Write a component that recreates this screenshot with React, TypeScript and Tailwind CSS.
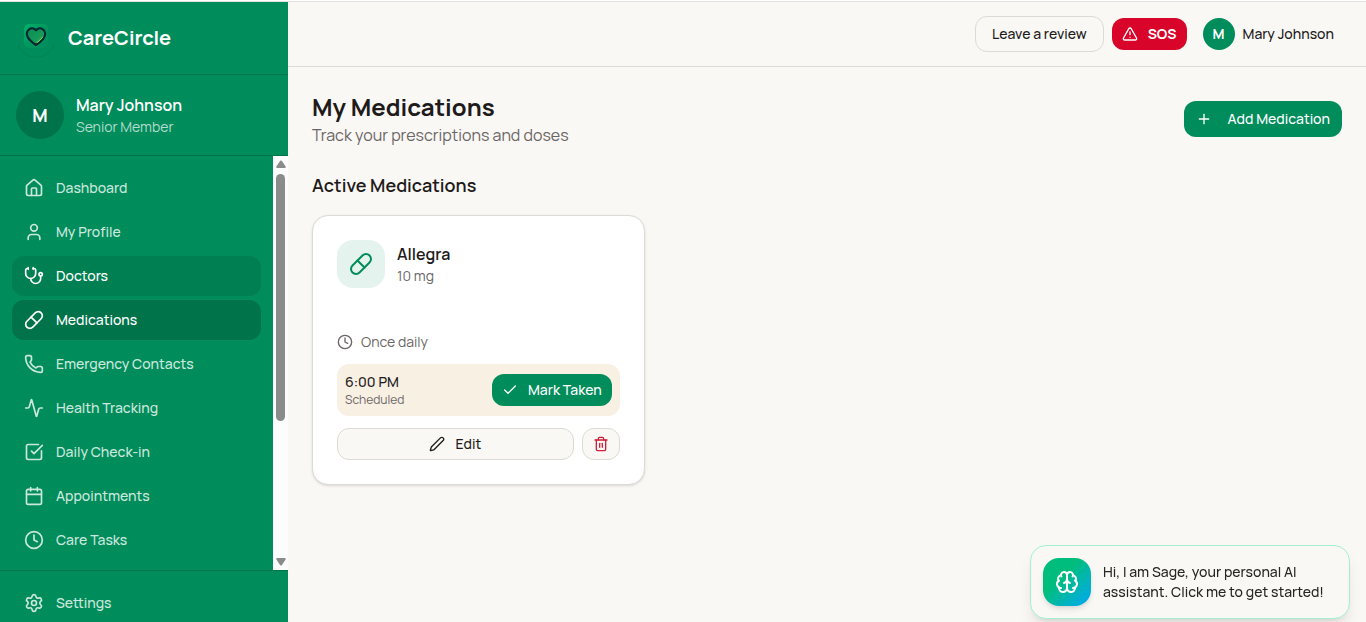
import {
  Activity,
  Brain,
  Calendar,
  Check,
  Clock,
  House,
  Pen,
  Phone,
  Pill,
  Plus,
  Settings,
  SquareCheckBig,
  Stethoscope,
  Trash2,
  TriangleAlert,
  User,
  type LucideIcon,
} from "lucide-react";

interface NavItem {
  label: string;
  icon: LucideIcon;
  state?: "active" | "hover";
}

const navItems: NavItem[] = [
  { label: "Dashboard", icon: House },
  { label: "My Profile", icon: User },
  { label: "Doctors", icon: Stethoscope, state: "hover" },
  { label: "Medications", icon: Pill, state: "active" },
  { label: "Emergency Contacts", icon: Phone },
  { label: "Health Tracking", icon: Activity },
  { label: "Daily Check-in", icon: SquareCheckBig },
  { label: "Appointments", icon: Calendar },
  { label: "Care Tasks", icon: Clock },
];

const medications = [
  { id: "1", name: "Allegra", dose: "10 mg", frequency: "Once daily", time: "6:00 PM", status: "Scheduled" },
];

function Logo() {
  return (
    <svg viewBox="0 0 40 40" className="size-10" aria-hidden="true">
      <defs>
        <linearGradient id="tile" x1="0" y1="0" x2="1" y2="1">
          <stop offset="0" stopColor="#00b368" />
          <stop offset="0.5" stopColor="#009860" />
          <stop offset="1" stopColor="#008c5b" />
        </linearGradient>
        <linearGradient id="heart" x1="0" y1="0" x2="1" y2="1">
          <stop offset="0" stopColor="#0a8a58" />
          <stop offset="0.6" stopColor="#169a58" />
          <stop offset="1" stopColor="#5fc95a" />
        </linearGradient>
      </defs>
      <path d="M1.5 26a19.5 19.5 0 0 0 37 0" fill="none" stroke="#007d51" strokeWidth="0.6" />
      <rect x="8" y="6" width="24" height="24" rx="5" fill="url(#tile)" />
      <path
        d="M20 12.2c-1.800-2-4.800-2.400-6.900-.9-2.500 1.800-2.800 5.300-1.300 8 1.700 3 4.700 5.400 8.200 7.700 3.500-2.300 6.500-4.700 8.200-7.700 1.500-2.700 1.200-6.200-1.300-8-2.100-1.500-5.100-1.100-6.900.9z"
        fill="url(#heart)"
        stroke="#04262f"
        strokeWidth="2.2"
        strokeLinejoin="round"
      />
      <path d="M21 24.500c2.400-1.500 4.300-3.300 5.500-5.400" fill="none" stroke="#8fdc5c" strokeWidth="1" />
    </svg>
  );
}

function NavLink({ item }: { item: NavItem }) {
  const Icon = item.icon;
  const look =
    item.state === "active"
      ? "bg-[#00734b] text-white"
      : item.state === "hover"
        ? "bg-[#007f52] text-white"
        : "text-[#cce8de]";

  return (
    <a
      href="#"
      aria-current={item.state === "active" ? "page" : undefined}
      className={`flex h-10 shrink-0 items-center gap-3 rounded-xl px-3 text-sm font-medium ${look}`}
    >
      <Icon className="size-5 shrink-0" />
      {item.label}
    </a>
  );
}

function Sidebar() {
  return (
    <aside className="flex w-72 shrink-0 flex-col bg-[#008c5b] text-white">
      <div className="flex h-[73px] items-center gap-3 border-b border-[#00734b] px-4">
        <Logo />
        <span className="text-xl font-bold">CareCircle</span>
      </div>

      <div className="flex items-center gap-3 border-b border-[#00734b] p-4">
        <div className="flex size-12 items-center justify-center rounded-full bg-[#00734b] text-lg font-bold">
          M
        </div>
        <div>
          <p className="text-base leading-6 font-semibold">Mary Johnson</p>
          <p className="text-sm text-[#b3dccd]">Senior Member</p>
        </div>
      </div>

      <div className="flex min-h-0 flex-1">
        <nav className="flex min-w-0 flex-1 flex-col gap-1 overflow-hidden p-3">
          {navItems.map((item) => (
            <NavLink key={item.label} item={item} />
          ))}
        </nav>
        {/* scrollbar */}
        <div className="flex w-[15px] flex-col items-center justify-between bg-[#fcfcfc] py-1" aria-hidden="true">
          <div className="flex min-h-0 flex-1 flex-col items-center gap-1.5">
            <svg viewBox="0 0 10 8" className="h-2 w-2.5 shrink-0" fill="#8b8b8b">
              <path d="M4.200.8Q5 0 5.800.8L9.600 6.500Q10 8 9 8H1Q0 8 .4 6.500z" />
            </svg>
            <div className="h-[62%] w-[9px] rounded-full bg-[#8b8b8b]" />
          </div>
          <svg viewBox="0 0 10 8" className="h-2 w-2.5 shrink-0" fill="#8b8b8b">
            <path d="M4.200 7.200Q5 8 5.800 7.200L9.600 1.500Q10 0 9 0H1Q0 0 .4 1.500z" />
          </svg>
        </div>
      </div>

      <div className="h-[52px] overflow-hidden border-t border-[#00734b] px-3 pt-3">
        <NavLink item={{ label: "Settings", icon: Settings }} />
      </div>
    </aside>
  );
}

function Header() {
  return (
    <header className="flex h-[65px] items-center justify-end gap-2 border-b border-[#dcdad3] px-6">
      <button className="h-9 rounded-xl border border-[#dcdad3] px-4 text-sm font-medium">
        Leave a review
      </button>
      <button className="flex h-8 items-center gap-2.5 rounded-xl bg-[#d90429] px-2.5 text-sm font-bold text-white">
        <TriangleAlert className="size-4" />
        SOS
      </button>
      <button className="flex items-center gap-2 px-2 text-sm font-medium">
        <span className="flex size-8 items-center justify-center rounded-full bg-[#008c5b] font-bold text-white">
          M
        </span>
        Mary Johnson
      </button>
    </header>
  );
}

function MedicationCard({ med }: { med: (typeof medications)[number] }) {
  return (
    <article className="rounded-2xl border border-[#dcdad3] bg-white p-6 shadow-sm">
      <div className="flex items-center gap-3">
        <div className="flex size-12 items-center justify-center rounded-2xl bg-[#e5f3ee] text-[#008c5b]">
          <Pill className="size-6" />
        </div>
        <div>
          <h3 className="text-base leading-6 font-semibold">{med.name}</h3>
          <p className="text-sm text-[#6b6666]">{med.dose}</p>
        </div>
      </div>

      <p className="mt-11 flex items-center gap-2 text-sm text-[#6b6666]">
        <Clock className="size-4" />
        {med.frequency}
      </p>

      <div className="mt-3 flex items-center justify-between rounded-xl bg-[#f8f0e3] p-2">
        <div>
          <p className="text-sm font-medium">{med.time}</p>
          <p className="text-xs text-[#6b6666]">{med.status}</p>
        </div>
        <button className="flex h-8 items-center gap-2.5 rounded-xl bg-[#008c5b] px-2.5 text-sm font-medium text-white">
          <Check className="size-4" />
          Mark Taken
        </button>
      </div>

      <div className="mt-3 flex gap-2">
        <button className="flex h-8 flex-1 items-center justify-center gap-2.5 rounded-xl border border-[#dcdad3] bg-[#f9f8f5] text-sm font-medium">
          <Pen className="size-4" />
          Edit
        </button>
        <button
          aria-label="Delete medication"
          className="flex h-8 w-[38px] items-center justify-center rounded-xl border border-[#dcdad3] bg-[#f9f8f5] text-[#cf1f3a]"
        >
          <Trash2 className="size-4" />
        </button>
      </div>
    </article>
  );
}

function SageAssistant() {
  return (
    <button className="fixed right-4 bottom-[3px] flex w-80 items-center gap-3 rounded-2xl border border-[#a4f0cf] bg-[#faf8f5] p-3 text-left shadow-lg">
      <span className="flex size-12 shrink-0 items-center justify-center rounded-2xl bg-linear-to-br from-[#00bc7d] from-40% to-[#00a6f4] text-white shadow-md">
        <Brain className="size-6" />
      </span>
      <span className="text-sm font-medium text-[#292524]">
        Hi, I am Sage, your personal AI assistant. Click me to get started!
      </span>
    </button>
  );
}

export default function App() {
  return (
    <div className="flex h-screen flex-col overflow-hidden bg-[#faf8f5] font-['Manrope','Inter',sans-serif] text-[#211a1a]">
      <div className="h-0.5 shrink-0 border-b border-[#e2e2e0] bg-white" />
      <div className="flex min-h-0 flex-1">
        <Sidebar />

        <div className="min-w-0 flex-1">
          <Header />

          <main className="p-6">
            <div className="flex items-center justify-between">
              <div>
                <h1 className="text-2xl font-bold">My Medications</h1>
                <p className="text-base text-[#6b6666]">
                  Track your prescriptions and doses
                </p>
              </div>
              <button className="flex h-9 items-center gap-4 rounded-xl bg-[#008c5b] px-3 text-sm font-medium text-white">
                <Plus className="size-4" />
                Add Medication
              </button>
            </div>

            <h2 className="mt-6 text-lg leading-7 font-semibold">Active Medications</h2>
            <div className="mt-4 grid grid-cols-1 gap-4 md:grid-cols-3">
              {medications.map((med) => (
                <MedicationCard key={med.id} med={med} />
              ))}
            </div>
          </main>
        </div>
      </div>

      <SageAssistant />
    </div>
  );
}
